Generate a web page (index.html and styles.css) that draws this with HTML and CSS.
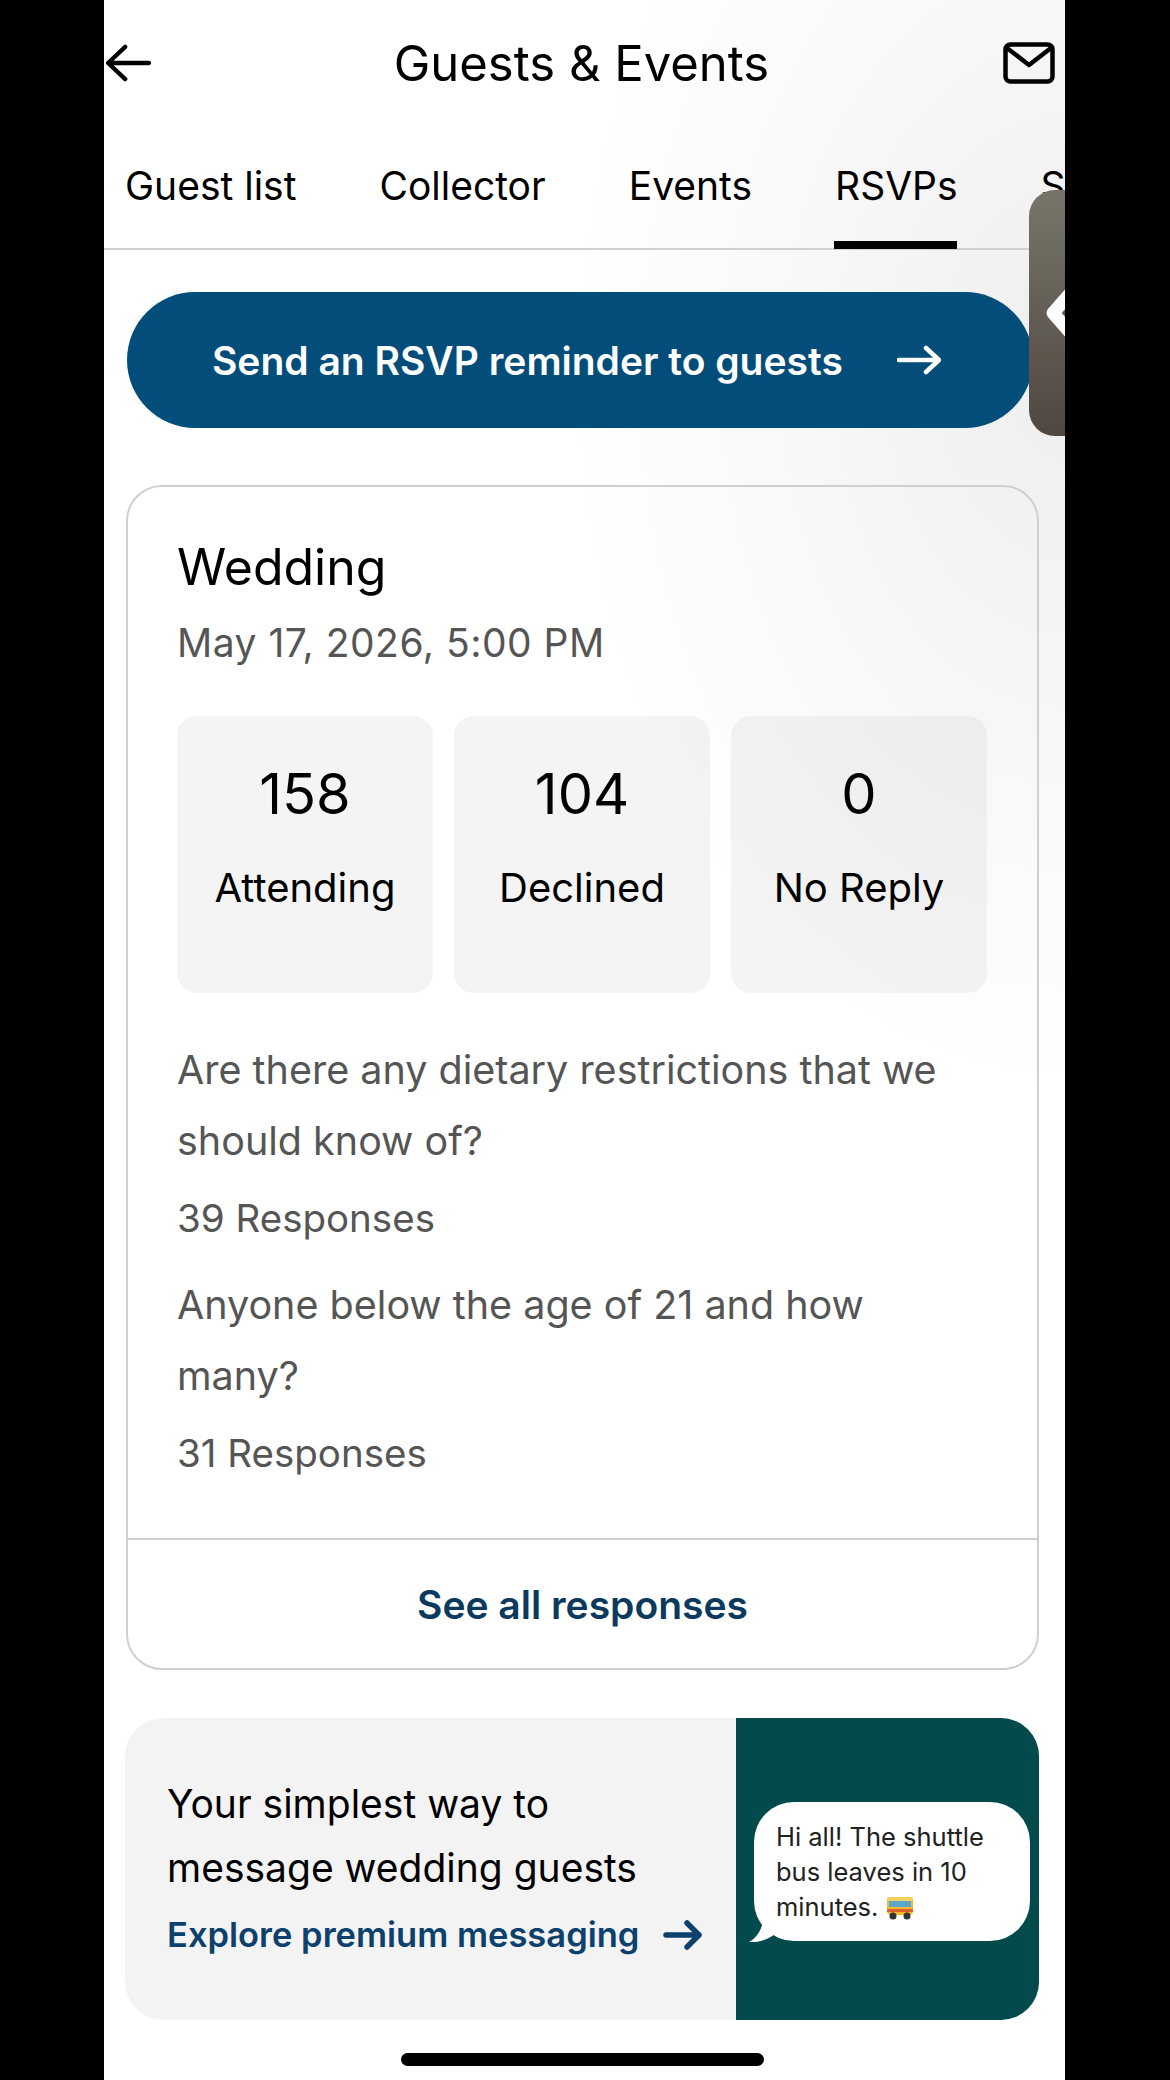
FILE: index.html
```html
<!DOCTYPE html>
<html lang="en">
<head>
    <meta charset="UTF-8">
    <meta name="viewport" content="width=device-width, initial-scale=1.0">
    <title>Guests &amp; Events</title>
    <link rel="stylesheet" href="styles.css">
</head>
<body>
    <div class="phone">
        <header class="topbar">
            <svg class="back" viewBox="0 0 50 40" width="48" height="38" fill="none" stroke="#000" stroke-width="4.5" stroke-linecap="round" stroke-linejoin="round">
                <path d="M46 20H4M21 3L3 20l18 17"/>
            </svg>
            <h1>Guests &amp; Events</h1>
            <svg class="mail" viewBox="0 0 52 42" width="52" height="42" fill="none" stroke="#000" stroke-width="4.5" stroke-linecap="round" stroke-linejoin="round">
                <rect x="2.5" y="2.5" width="47" height="37" rx="5"/>
                <path d="M4 6l22 17L48 6"/>
            </svg>
        </header>

        <nav class="tabs">
            <span class="tab">Guest list</span>
            <span class="tab">Collector</span>
            <span class="tab">Events</span>
            <span class="tab active">RSVPs</span>
            <span class="tab">Seating</span>
        </nav>

        <main class="content">
            <a class="reminder">
                <span>Send an RSVP reminder to guests</span>
                <svg viewBox="0 0 44 30" width="44" height="30" fill="none" stroke="#fff" stroke-width="4.5" stroke-linecap="round" stroke-linejoin="round">
                    <path d="M2 15h40M29 3l13 12-13 12"/>
                </svg>
            </a>

            <section class="card">
                <div class="card-body">
                    <h2>Wedding</h2>
                    <p class="date">May 17, 2026, 5:00 PM</p>
                    <div class="stats">
                        <div class="stat"><strong>158</strong><span>Attending</span></div>
                        <div class="stat"><strong>104</strong><span>Declined</span></div>
                        <div class="stat"><strong>0</strong><span>No Reply</span></div>
                    </div>
                    <div class="question">
                        <p>Are there any dietary restrictions that we should know of?</p>
                        <p class="count">39 Responses</p>
                    </div>
                    <div class="question">
                        <p>Anyone below the age of 21 and how many?</p>
                        <p class="count">31 Responses</p>
                    </div>
                </div>
                <a class="see-all">See all responses</a>
            </section>

            <section class="promo">
                <div class="promo-text">
                    <p>Your simplest way to<br>message wedding guests</p>
                    <a class="promo-link">
                        <span>Explore premium messaging</span>
                        <svg viewBox="0 0 40 30" width="40" height="30" fill="none" stroke="#0c416d" stroke-width="5.5" stroke-linecap="round" stroke-linejoin="round">
                            <path d="M3 15h33M24 3l12 12-12 12"/>
                        </svg>
                    </a>
                </div>
                <div class="promo-art">
                    <div class="bubble">
                        Hi all! The shuttle bus leaves in 10 minutes.
                        <svg class="bus" viewBox="0 0 28 24" width="28" height="24">
                            <rect x="1" y="1" width="26" height="18" rx="4" fill="#f5b62e"/>
                            <rect x="1" y="1" width="26" height="4" rx="2" fill="#f0d060"/>
                            <rect x="3" y="5" width="22" height="6" fill="#5aa7c9"/>
                            <rect x="1" y="13" width="26" height="3" fill="#d9622b"/>
                            <circle cx="7" cy="20" r="3.5" fill="#333"/>
                            <circle cx="21" cy="20" r="3.5" fill="#333"/>
                        </svg>
                        <svg class="tail" viewBox="0 0 26 24" width="26" height="24">
                            <path d="M14 0C14 10 8 20 0 24c9 1 18-2 26-8z" fill="#fff"/>
                        </svg>
                    </div>
                </div>
            </section>
        </main>

        <div class="home-bar"></div>

        <div class="side-handle">
            <svg viewBox="0 0 36 80" width="36" height="80" fill="none" stroke="#fff" stroke-width="13" stroke-linejoin="round">
                <path d="M42 6L12 40l30 34"/>
            </svg>
        </div>
    </div>
</body>
</html>
```

FILE: styles.css
```css
* {
    box-sizing: border-box;
}

body {
    margin: 0;
    background: #000;
    font-family: "Inter", "Liberation Sans", sans-serif;
    color: #000;
}

.phone {
    position: relative;
    width: 961px;
    height: 2080px;
    margin-left: 104px;
    overflow: hidden;
    background: radial-gradient(ellipse 500px 720px at 100% 18%, #eeeeef 0%, #f8f8f8 55%, #fff 100%);
}

.topbar {
    display: flex;
    align-items: center;
    justify-content: space-between;
    height: 126px;
    padding: 0 10px 0 1px;
}

.topbar h1 {
    margin: 0 0 0 7px;
    font-size: 49px;
    font-weight: 400;
}

.tabs {
    display: flex;
    gap: 83px;
    height: 124px;
    padding: 32px 0 0 21px;
    border-bottom: 2px solid #d0d0d0;
    white-space: nowrap;
}

.tab {
    position: relative;
    font-size: 39px;
    line-height: 56px;
    height: 90px;
}

.tab.active::after {
    content: "";
    position: absolute;
    left: -1px;
    right: 1px;
    bottom: -1px;
    height: 8px;
    background: #000;
}

.content {
    padding: 42px 26px 0 23px;
}

.reminder {
    display: flex;
    align-items: center;
    gap: 54px;
    width: 906px;
    height: 136px;
    padding-left: 85px;
    border-radius: 68px;
    background: #024d7a;
    color: #fff;
    font-size: 39px;
    font-weight: 600;
}

.card {
    margin: 57px 0 0 -1px;
    border: 2px solid #cfcfcf;
    border-radius: 36px;
}

.card-body {
    padding: 48px 50px 49px 49px;
}

.card h2 {
    margin: 0;
    font-size: 50px;
    font-weight: 400;
    line-height: 64px;
}

.date {
    margin: 19px 0 0;
    font-size: 39px;
    letter-spacing: 0.5px;
    line-height: 50px;
    color: #555;
}

.stats {
    display: grid;
    grid-template-columns: repeat(3, 1fr);
    gap: 21px;
    margin-top: 48px;
}

.stat {
    display: flex;
    flex-direction: column;
    align-items: center;
    height: 277px;
    padding-top: 43px;
    border-radius: 20px;
    background: rgba(0, 0, 0, 0.045);
}

.stat strong {
    font-size: 56px;
    font-weight: 400;
    line-height: 70px;
}

.stat span {
    margin-top: 34px;
    font-size: 40px;
    line-height: 50px;
}

.question {
    font-size: 39.5px;
    line-height: 71px;
    color: #555;
}

.stats + .question {
    margin-top: 42px;
}

.question + .question {
    margin-top: 16px;
}

.question p {
    margin: 0;
}

.question .count {
    margin-top: 6px;
    font-size: 38.5px;
}

.see-all {
    display: block;
    height: 130px;
    border-top: 2px solid #cfcfcf;
    font-size: 39px;
    font-weight: 600;
    line-height: 130px;
    text-align: center;
    color: #0b3a5e;
}

.promo {
    display: flex;
    width: 914px;
    height: 302px;
    margin: 48px 0 0 -2px;
    border-radius: 38px;
    overflow: hidden;
    background: #f3f3f4;
}

.promo-text {
    width: 611px;
    padding: 54px 0 0 42px;
}

.promo-text p {
    margin: 0;
    font-size: 39px;
    line-height: 64px;
}

.promo-link {
    display: flex;
    align-items: center;
    gap: 24px;
    margin-top: 10px;
    font-size: 34.5px;
    font-weight: 600;
    line-height: 50px;
    color: #0c416d;
}

.promo-art {
    flex: 1;
    padding: 84px 0 0 18px;
    background: #024a4c;
}

.bubble {
    position: relative;
    width: 276px;
    height: 139px;
    padding: 17px 10px 0 22px;
    border-radius: 40px;
    background: #fff;
    font-size: 25.5px;
    line-height: 35px;
    color: #222;
}

.bus {
    vertical-align: -4px;
}

.tail {
    position: absolute;
    left: -5px;
    bottom: -1px;
}

.home-bar {
    width: 363px;
    height: 13px;
    margin: 33px 0 0 297px;
    border-radius: 7px;
    background: #000;
}

.side-handle {
    position: absolute;
    top: 190px;
    left: 925px;
    display: flex;
    align-items: center;
    width: 60px;
    height: 246px;
    padding-left: 12px;
    border-radius: 26px;
    background: linear-gradient(#77756a, #4f4740);
}
```
